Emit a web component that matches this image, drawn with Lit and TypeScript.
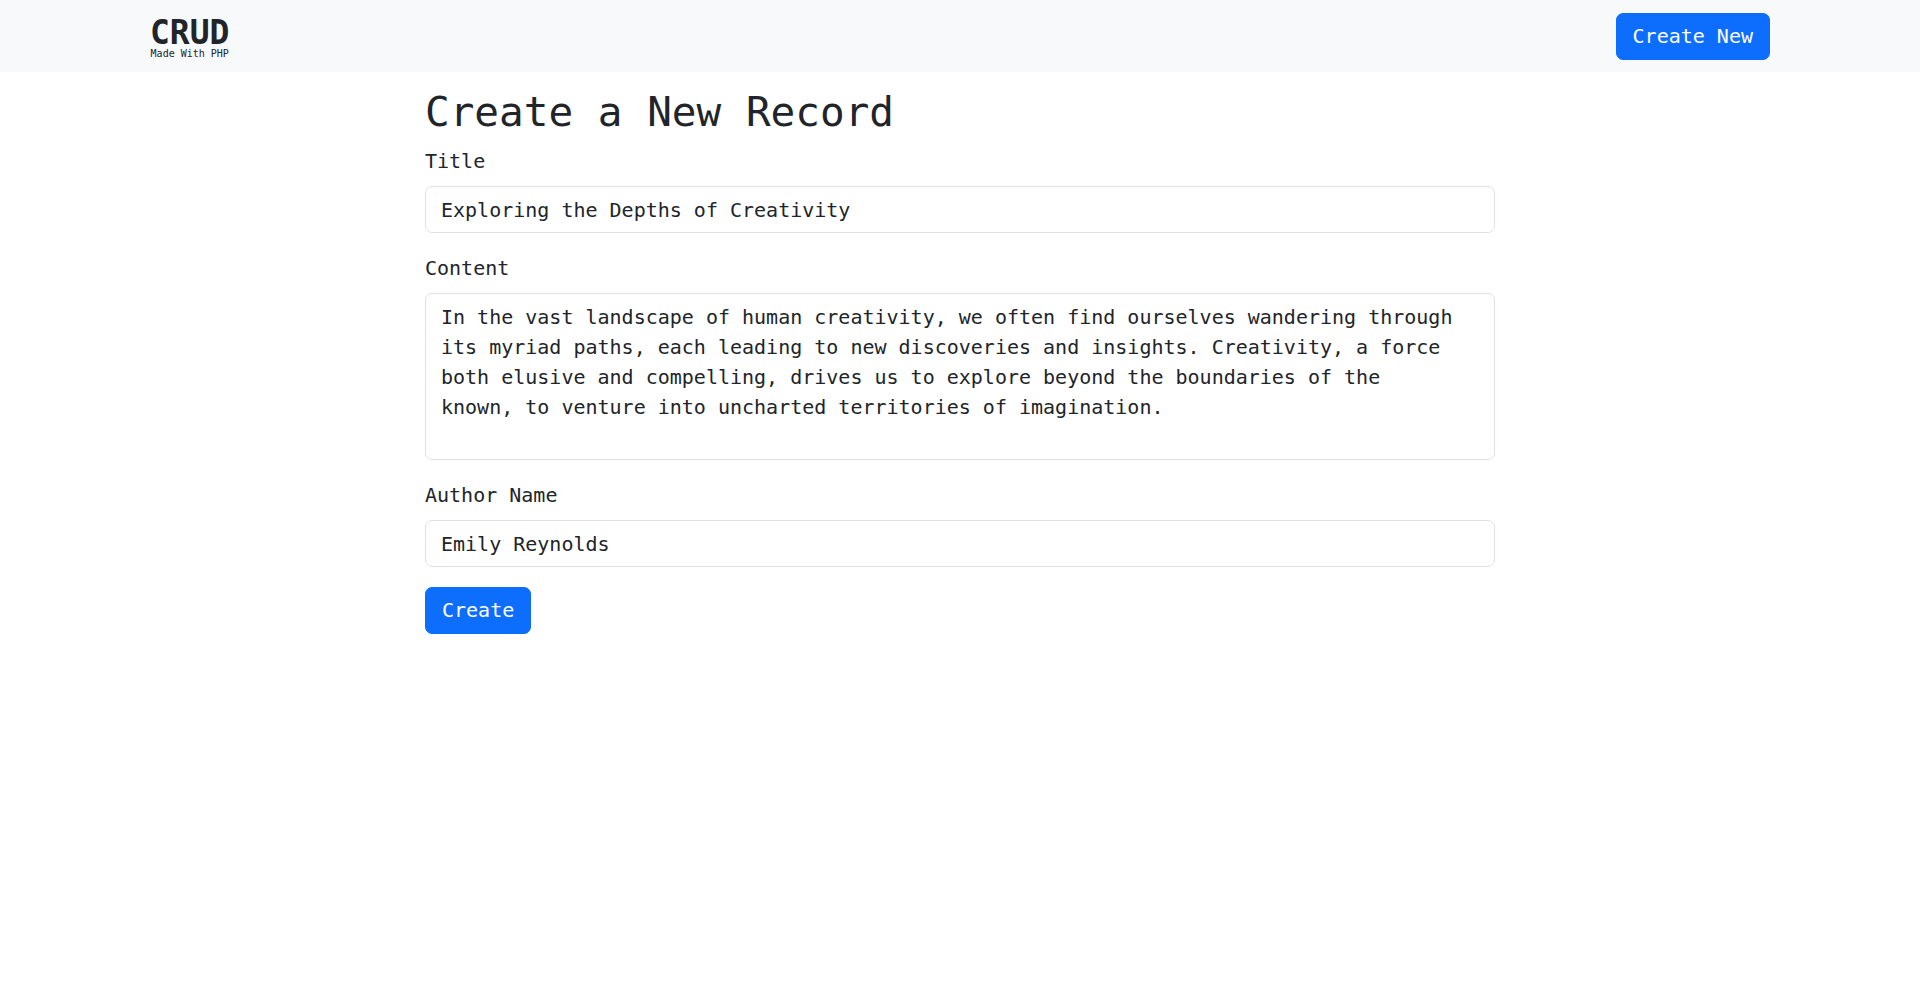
import { LitElement, html, css } from "lit";
import { customElement, state } from "lit/decorators.js";

@customElement("app-root")
export class AppRoot extends LitElement {
  static styles = css`
    :host {
      display: block;
      min-height: 100vh;
      background: #ffffff;
      color: #212529;
      font-family: "DejaVu Sans Mono", monospace;
      font-size: 20px;
      line-height: 30px;
    }
    *,
    *::before,
    *::after {
      box-sizing: border-box;
    }
    .navbar {
      background: #f8f9fa;
      padding: 13px 20px 12px;
    }
    .nav-inner {
      display: flex;
      align-items: center;
      justify-content: space-between;
      max-width: 1620px;
      margin: 0 auto;
    }
    .brand {
      display: flex;
      flex-direction: column;
      align-items: center;
      padding-top: 2px;
      color: #212529;
      text-decoration: none;
    }
    .brand-name {
      font-size: 33px;
      font-weight: 700;
      line-height: 32px;
    }
    .brand-tag {
      font-size: 10px;
      line-height: 10px;
    }
    .btn {
      display: inline-block;
      padding: 7px 16px 8px;
      border: 1px solid #0d6efd;
      border-radius: 7px;
      background: #0d6efd;
      color: #ffffff;
      font-family: inherit;
      font-size: 20px;
      line-height: 30px;
      text-decoration: none;
      cursor: pointer;
    }
    .content {
      max-width: 1110px;
      margin: 0 auto;
      padding: 16px 20px;
    }
    .title {
      margin: 0 0 10px;
      font-size: 41px;
      font-weight: 400;
      line-height: 48px;
    }
    .form {
      display: flex;
      flex-direction: column;
      align-items: flex-start;
      gap: 20px;
    }
    .field {
      display: flex;
      flex-direction: column;
      gap: 10px;
      width: 100%;
    }
    .control {
      display: block;
      width: 100%;
      margin: 0;
      padding: 8px 15px 7px;
      border: 1px solid #dee2e6;
      border-radius: 7px;
      background: #ffffff;
      color: #212529;
      font-family: inherit;
      font-size: 20px;
      line-height: 30px;
      outline: none;
    }
    .control:focus {
      border-color: #86b7fe;
    }
    textarea.control {
      padding-right: 40px;
      resize: none;
      overflow: hidden;
    }
  `;

  @state() private heading = "Exploring the Depths of Creativity";
  @state() private body =
    "In the vast landscape of human creativity, we often find ourselves wandering through its myriad paths, each leading to new discoveries and insights. Creativity, a force both elusive and compelling, drives us to explore beyond the boundaries of the known, to venture into uncharted territories of imagination.";
  @state() private author = "Emily Reynolds";

  private onSubmit(event: Event) {
    event.preventDefault();
  }

  render() {
    return html`
      <nav class="navbar">
        <div class="nav-inner">
          <a class="brand" href="#">
            <span class="brand-name">CRUD</span>
            <span class="brand-tag">Made With PHP</span>
          </a>
          <a class="btn" href="#create">Create New</a>
        </div>
      </nav>
      <main class="content">
        <h1 class="title">Create a New Record</h1>
        <form class="form" @submit=${this.onSubmit}>
          <div class="field">
            <label for="title">Title</label>
            <input class="control" id="title" type="text" .value=${this.heading} />
          </div>
          <div class="field">
            <label for="content">Content</label>
            <textarea class="control" id="content" rows="5" spellcheck="false" .value=${this.body}></textarea>
          </div>
          <div class="field">
            <label for="author">Author Name</label>
            <input class="control" id="author" type="text" .value=${this.author} />
          </div>
          <button class="btn" type="submit">Create</button>
        </form>
      </main>
    `;
  }
}
